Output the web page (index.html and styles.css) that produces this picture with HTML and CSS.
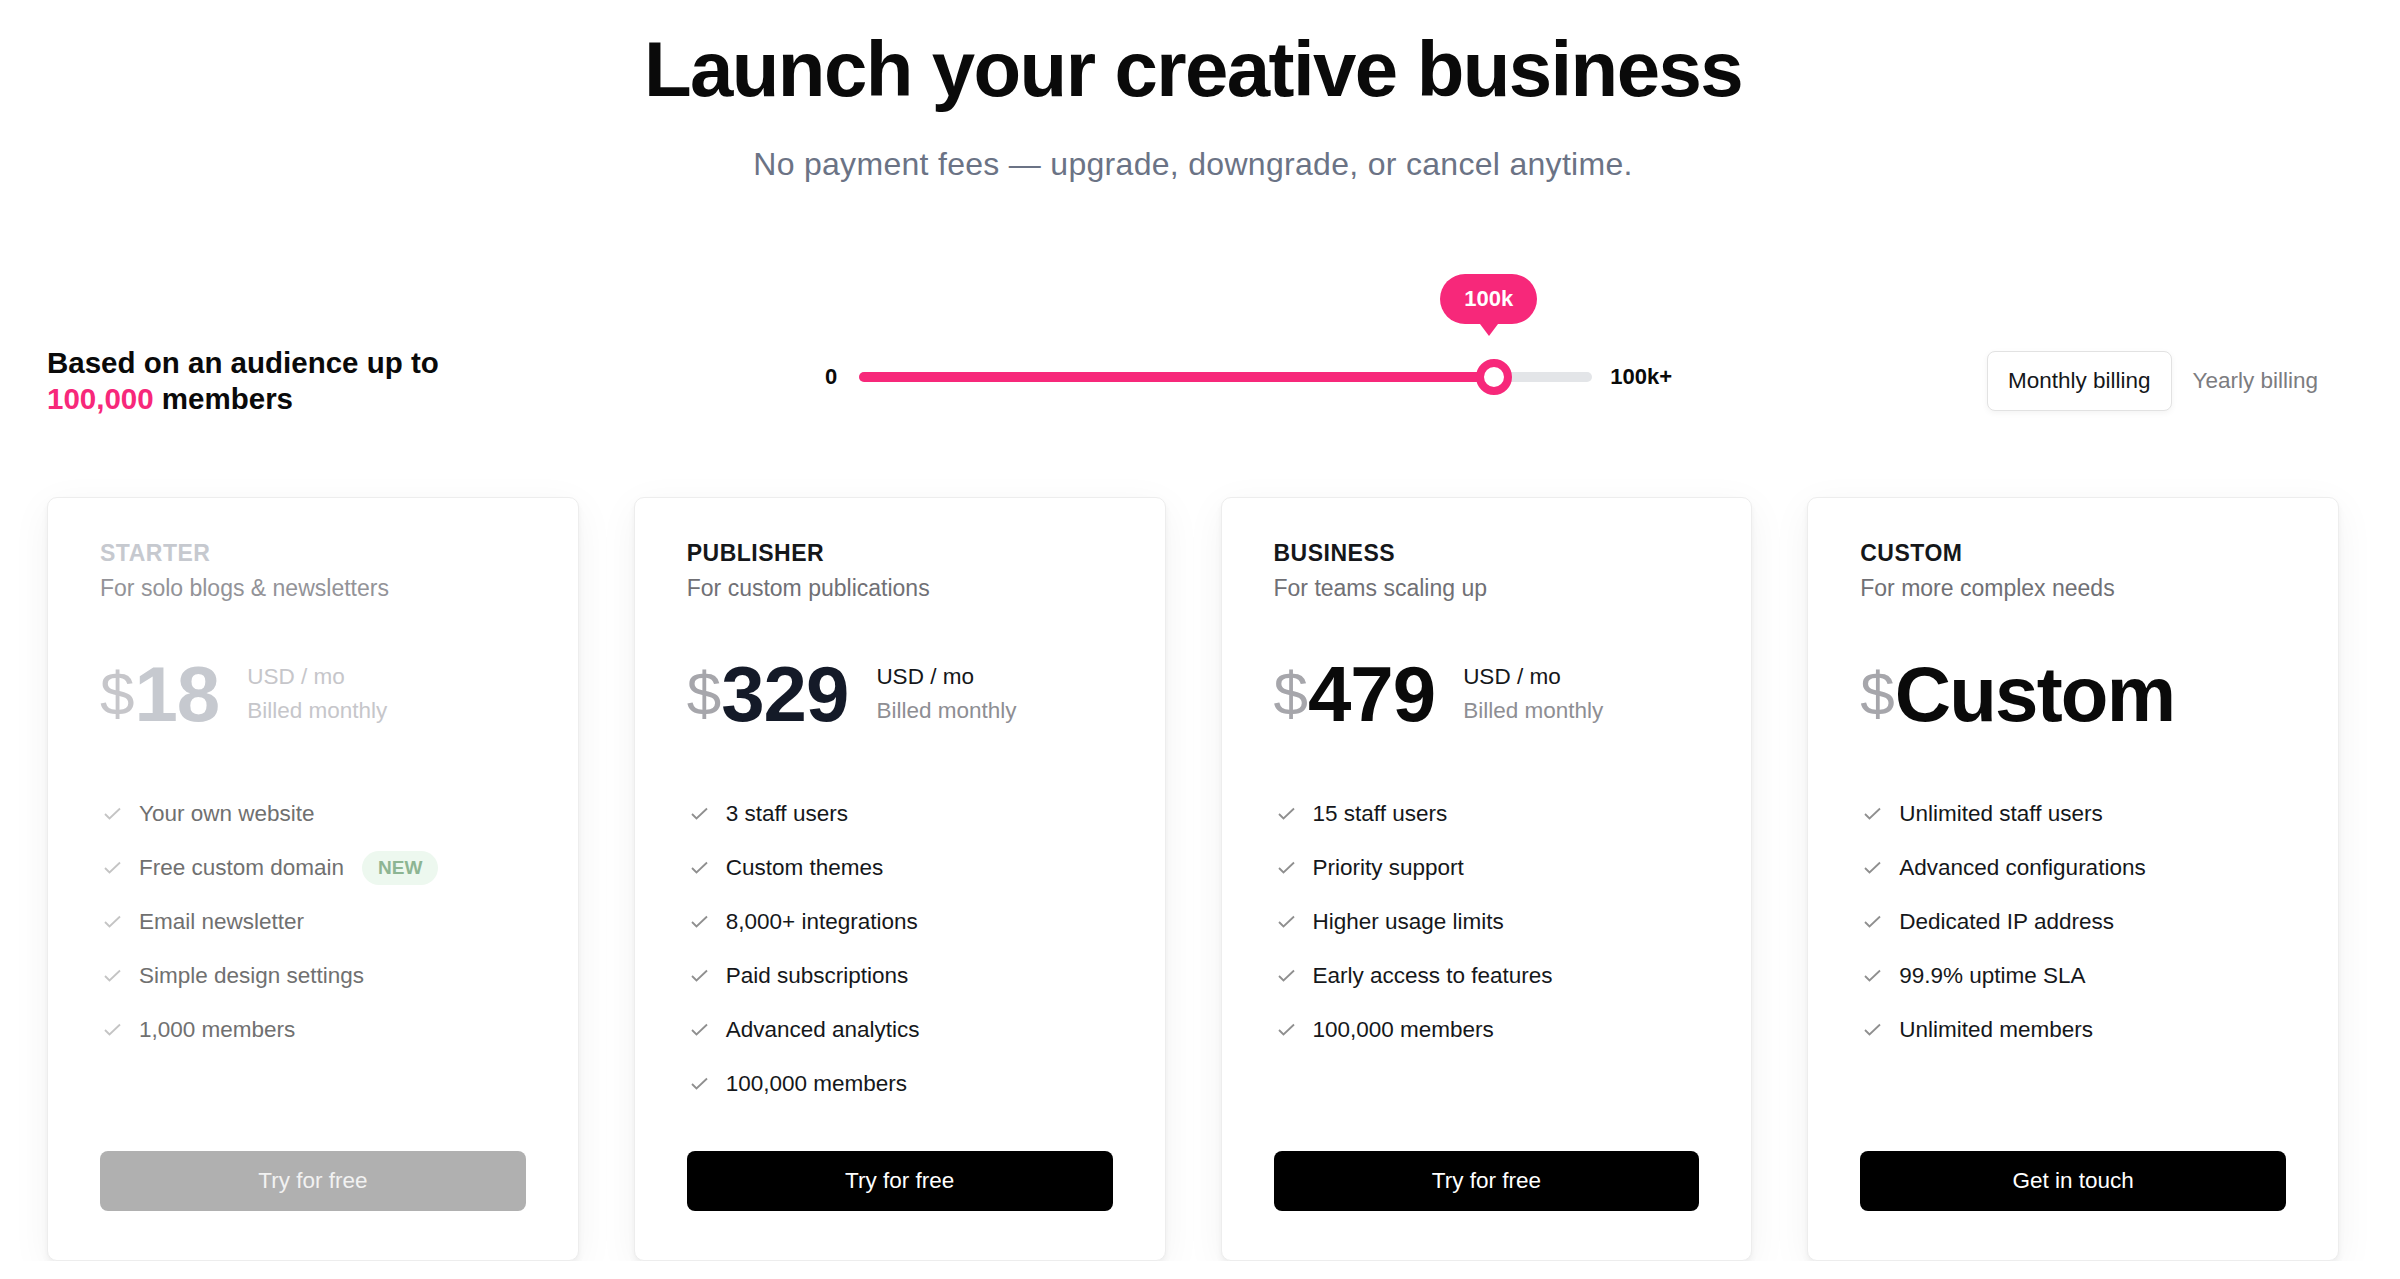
FILE: index.html
```html
<!DOCTYPE html>
<html lang="en">
<head>
  <meta charset="UTF-8">
  <meta name="viewport" content="width=device-width, initial-scale=1.0">
  <title>Pricing</title>
  <link rel="stylesheet" href="styles.css">
</head>
<body>
  <div class="page">
    <header class="hero">
      <h1>Launch your creative business</h1>
      <p class="lead">No payment fees — upgrade, downgrade, or cancel anytime.</p>
    </header>

    <div class="audience">
      <div class="audience-text">
        Based on an audience up to<br>
        <span class="pink">100,000</span> members
      </div>

      <div class="slider">
        <span class="slider-label">0</span>
        <div class="track">
          <div class="fill" style="width: 635px;"></div>
          <div class="thumb" style="left: 635px;">
            <div class="bubble">100k</div>
          </div>
        </div>
        <span class="slider-label">100k+</span>
      </div>

      <div class="billing">
        <button class="billing-btn active">Monthly billing</button>
        <button class="billing-btn">Yearly billing</button>
      </div>
    </div>

    <div class="plans">
      <div class="card dim">
        <h3 class="plan-name">STARTER</h3>
        <p class="plan-desc">For solo blogs &amp; newsletters</p>
        <div class="price">
          <span class="currency">$</span><span class="amount">18</span>
          <div class="price-meta">
            <span class="unit">USD / mo</span>
            <span class="billed">Billed monthly</span>
          </div>
        </div>
        <ul class="features">
          <li><svg class="check" viewBox="0 0 22 14"><polyline points="5,7 9.5,11.5 20,1.5"/></svg>Your own website</li>
          <li><svg class="check" viewBox="0 0 22 14"><polyline points="5,7 9.5,11.5 20,1.5"/></svg>Free custom domain <span class="badge">NEW</span></li>
          <li><svg class="check" viewBox="0 0 22 14"><polyline points="5,7 9.5,11.5 20,1.5"/></svg>Email newsletter</li>
          <li><svg class="check" viewBox="0 0 22 14"><polyline points="5,7 9.5,11.5 20,1.5"/></svg>Simple design settings</li>
          <li><svg class="check" viewBox="0 0 22 14"><polyline points="5,7 9.5,11.5 20,1.5"/></svg>1,000 members</li>
        </ul>
        <button class="cta">Try for free</button>
      </div>

      <div class="card">
        <h3 class="plan-name">PUBLISHER</h3>
        <p class="plan-desc">For custom publications</p>
        <div class="price">
          <span class="currency">$</span><span class="amount navy">329</span>
          <div class="price-meta">
            <span class="unit">USD / mo</span>
            <span class="billed">Billed monthly</span>
          </div>
        </div>
        <ul class="features">
          <li><svg class="check" viewBox="0 0 22 14"><polyline points="5,7 9.5,11.5 20,1.5"/></svg>3 staff users</li>
          <li><svg class="check" viewBox="0 0 22 14"><polyline points="5,7 9.5,11.5 20,1.5"/></svg>Custom themes</li>
          <li><svg class="check" viewBox="0 0 22 14"><polyline points="5,7 9.5,11.5 20,1.5"/></svg>8,000+ integrations</li>
          <li><svg class="check" viewBox="0 0 22 14"><polyline points="5,7 9.5,11.5 20,1.5"/></svg>Paid subscriptions</li>
          <li><svg class="check" viewBox="0 0 22 14"><polyline points="5,7 9.5,11.5 20,1.5"/></svg>Advanced analytics</li>
          <li><svg class="check" viewBox="0 0 22 14"><polyline points="5,7 9.5,11.5 20,1.5"/></svg>100,000 members</li>
        </ul>
        <button class="cta">Try for free</button>
      </div>

      <div class="card">
        <h3 class="plan-name">BUSINESS</h3>
        <p class="plan-desc">For teams scaling up</p>
        <div class="price">
          <span class="currency">$</span><span class="amount">479</span>
          <div class="price-meta">
            <span class="unit">USD / mo</span>
            <span class="billed">Billed monthly</span>
          </div>
        </div>
        <ul class="features">
          <li><svg class="check" viewBox="0 0 22 14"><polyline points="5,7 9.5,11.5 20,1.5"/></svg>15 staff users</li>
          <li><svg class="check" viewBox="0 0 22 14"><polyline points="5,7 9.5,11.5 20,1.5"/></svg>Priority support</li>
          <li><svg class="check" viewBox="0 0 22 14"><polyline points="5,7 9.5,11.5 20,1.5"/></svg>Higher usage limits</li>
          <li><svg class="check" viewBox="0 0 22 14"><polyline points="5,7 9.5,11.5 20,1.5"/></svg>Early access to features</li>
          <li><svg class="check" viewBox="0 0 22 14"><polyline points="5,7 9.5,11.5 20,1.5"/></svg>100,000 members</li>
        </ul>
        <button class="cta">Try for free</button>
      </div>

      <div class="card">
        <h3 class="plan-name">CUSTOM</h3>
        <p class="plan-desc">For more complex needs</p>
        <div class="price">
          <span class="currency">$</span><span class="amount tight">Custom</span>
        </div>
        <ul class="features">
          <li><svg class="check" viewBox="0 0 22 14"><polyline points="5,7 9.5,11.5 20,1.5"/></svg>Unlimited staff users</li>
          <li><svg class="check" viewBox="0 0 22 14"><polyline points="5,7 9.5,11.5 20,1.5"/></svg>Advanced configurations</li>
          <li><svg class="check" viewBox="0 0 22 14"><polyline points="5,7 9.5,11.5 20,1.5"/></svg>Dedicated IP address</li>
          <li><svg class="check" viewBox="0 0 22 14"><polyline points="5,7 9.5,11.5 20,1.5"/></svg>99.9% uptime SLA</li>
          <li><svg class="check" viewBox="0 0 22 14"><polyline points="5,7 9.5,11.5 20,1.5"/></svg>Unlimited members</li>
        </ul>
        <button class="cta">Get in touch</button>
      </div>
    </div>
  </div>
</body>
</html>
```

FILE: styles.css
```css
body {
  margin: 0;
  padding: 0;
  font-family: "Liberation Sans", Arial, sans-serif;
  background-color: #fff;
  color: #15171a;
}

.page {
  padding: 26px 61px 0 47px;
}

/* header */

.hero {
  text-align: center;
}

.hero h1 {
  margin: 0;
  font-size: 78px;
  line-height: 86px;
  font-weight: bold;
  letter-spacing: -1.6px;
  color: #0a0a0a;
}

.lead {
  margin: 33px 0 0;
  font-size: 32px;
  line-height: 38px;
  letter-spacing: 0.3px;
  color: #6b7385;
}

/* audience row */

.audience {
  display: flex;
  align-items: center;
  margin-top: 162px;
}

.audience-text {
  width: 778px;
  font-size: 29.5px;
  line-height: 36px;
  font-weight: bold;
  color: #0a0a0a;
}

.pink {
  color: #f7287a;
}

.slider {
  display: flex;
  align-items: center;
  margin-top: -8px;
}

.slider-label {
  font-size: 22px;
  font-weight: bold;
  color: #0a0a0a;
}

.track {
  position: relative;
  width: 733px;
  height: 10px;
  margin: 0 18px 0 22px;
  border-radius: 5px;
  background-color: #e3e5e8;
}

.fill {
  height: 100%;
  border-radius: 5px;
  background-color: #f7287a;
}

.thumb {
  position: absolute;
  top: 50%;
  width: 20px;
  height: 20px;
  border: 8px solid #f7287a;
  border-radius: 50%;
  background-color: #fff;
  transform: translate(-50%, -50%);
}

.bubble {
  position: absolute;
  bottom: 63px;
  left: 50%;
  width: 97px;
  height: 50px;
  margin-left: -54px;
  border-radius: 25px;
  background-color: #f7287a;
  color: #fff;
  font-size: 22px;
  font-weight: bold;
  line-height: 50px;
  text-align: center;
}

.bubble::after {
  content: "";
  position: absolute;
  top: 46px;
  left: 50%;
  margin-left: -12px;
  border-left: 12px solid transparent;
  border-right: 12px solid transparent;
  border-top: 16px solid #f7287a;
}

.billing {
  display: flex;
  margin-left: auto;
}

.billing-btn {
  height: 60px;
  padding: 0 20px;
  border: 1px solid transparent;
  border-radius: 8px;
  background: none;
  font-family: inherit;
  font-size: 22.5px;
  color: #7c7c80;
  cursor: pointer;
}

.billing-btn.active {
  border-color: #e2e2e2;
  background-color: #fff;
  color: #15171a;
  box-shadow: 0 2px 6px rgba(0, 0, 0, 0.05);
}

/* plan cards */

.plans {
  display: grid;
  grid-template-columns: repeat(4, 1fr);
  gap: 55px;
  margin-top: 80px;
}

.card {
  display: flex;
  flex-direction: column;
  padding: 41px 52px 49px;
  border: 1px solid #ededed;
  border-radius: 10px;
  background-color: #fff;
  box-shadow: 0 4px 6px rgba(0, 0, 0, 0.05), 0 10px 40px rgba(0, 0, 0, 0.05);
}

.plan-name {
  margin: 0;
  font-size: 23px;
  line-height: 28px;
  font-weight: bold;
  letter-spacing: 0.5px;
  color: #15171a;
}

.plan-desc {
  margin: 7px 0 0;
  font-size: 23px;
  line-height: 28px;
  color: #707075;
}

.price {
  display: flex;
  align-items: flex-start;
  margin-top: 53px;
  height: 78px;
}

.currency {
  font-size: 62px;
  line-height: 78px;
  color: #a6a6ab;
}

.amount {
  font-size: 78px;
  line-height: 78px;
  font-weight: bold;
  letter-spacing: -1px;
  color: #0a0a0a;
}

.amount.navy {
  color: #141a28;
}

.amount.tight {
  letter-spacing: -1.8px;
}

.price-meta {
  display: flex;
  flex-direction: column;
  margin: 5px 0 0 28px;
  font-size: 22.5px;
  line-height: 34px;
}

.unit {
  color: #15171a;
}

.billed {
  color: #8e8e93;
}

.features {
  flex: 1;
  margin: 54px 0 0;
  padding: 0;
  list-style: none;
}

.features li {
  display: flex;
  align-items: center;
  height: 54px;
  font-size: 22.5px;
  color: #15171a;
}

.check {
  width: 22px;
  height: 14px;
  margin-right: 17px;
  fill: none;
  stroke: #8f8f8f;
  stroke-width: 1.8;
}

.badge {
  margin-left: 18px;
  padding: 0 16px;
  height: 34px;
  line-height: 34px;
  border-radius: 17px;
  background-color: #edf8ef;
  color: #8db593;
  font-size: 19px;
  font-weight: bold;
}

.cta {
  height: 60px;
  margin-top: 40px;
  border: none;
  border-radius: 8px;
  background-color: #000;
  color: #fff;
  font-family: inherit;
  font-size: 22.5px;
  cursor: pointer;
}

/* starter card is faded out */

.card.dim .plan-name,
.card.dim .amount {
  color: #c6c9cf;
}

.card.dim .plan-desc {
  color: #939398;
}

.card.dim .currency,
.card.dim .unit,
.card.dim .billed {
  color: #c6c6ca;
}

.card.dim .features li {
  color: #707070;
}

.card.dim .check {
  stroke: #c4c4c4;
}

.card.dim .cta {
  background-color: #b0b0b0;
  color: #f2f2f2;
}
```
